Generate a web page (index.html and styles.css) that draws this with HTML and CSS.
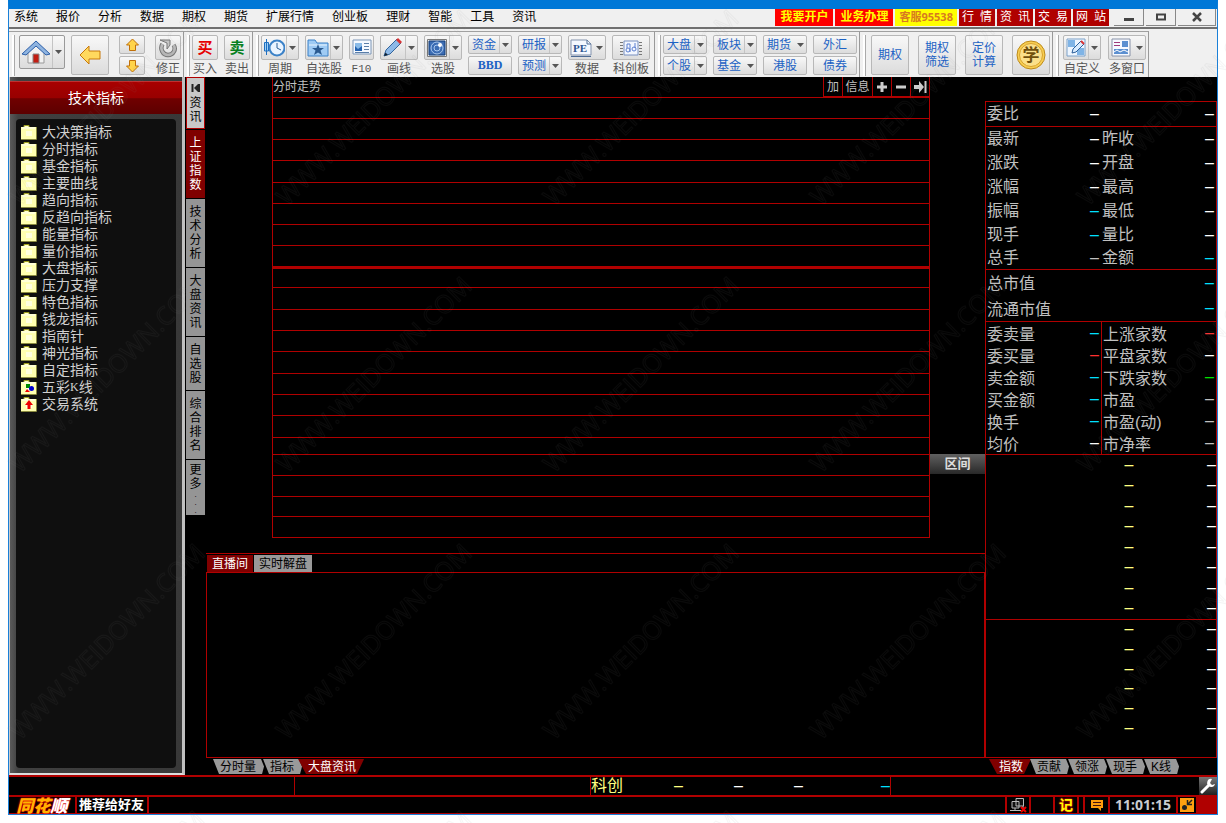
FILE: index.html
```html
<!DOCTYPE html>
<html lang="zh-CN">
<head>
<meta charset="utf-8">
<title>同花顺</title>
<link rel="stylesheet" href="styles.css">
</head>
<body>
<svg class="defs" aria-hidden="true">
  <symbol id="caret" viewBox="0 0 7 4"><path d="M0 0H7L3.500 4Z" fill="#555"/></symbol>
  <symbol id="folder" viewBox="0 0 16 15"><path d="M3 2V0.500H8V2" fill="#ffc" stroke="#a0a020"/><path d="M0 2H15V14H0Z" fill="#ffffb0"/><path d="M0 14.500H15.500V2" fill="none" stroke="#8a8a40"/><path d="M1 3H14" stroke="#fff"/><path d="M5 6H11V11H5Z" fill="#ffffe0"/></symbol>
</svg>
<div class="window">
  <header>
    <div class="menubar">
      <nav class="menu">
        <button>系统</button><button>报价</button><button>分析</button><button>数据</button><button>期权</button><button>期货</button><button>扩展行情</button><button>创业板</button><button>理财</button><button>智能</button><button>工具</button><button>资讯</button>
      </nav>
      <div class="tags">
        <a class="hot" href="#">我要开户</a><a class="hot" href="#">业务办理</a><a class="phone" href="#">客服95538</a><a href="#">行&#8194;情</a><a href="#">资&#8194;讯</a><a href="#">交&#8194;易</a><a href="#">网&#8194;站</a>
      </div>
      <div class="winbtns">
        <button aria-label="最小化"><svg width="12" height="10"><path d="M1 7.500H11" stroke="#444" stroke-width="3"/></svg></button>
        <button aria-label="最大化"><svg width="12" height="10"><path d="M2 2.500H10V7.500H2Z" fill="none" stroke="#444" stroke-width="2"/></svg></button>
        <button class="close" aria-label="关闭"><svg width="12" height="10"><path d="M2 1L10 9M10 1L2 9" stroke="#444" stroke-width="2.500"/></svg></button>
      </div>
    </div>
    <div class="toolbar">
      <div class="group wide">
        <div class="split home">
          <button aria-label="首页"><svg width="30" height="30" viewBox="0 0 30 30"><path d="M7 15V26H23V15L15 8Z" fill="#f2f2f2" stroke="#999"/><path d="M1 17L15 4L29 17L25 18L15 9L5 18Z" fill="#8fb4e0" stroke="#2d5fa8"/><path d="M12 17H18V26H12Z" fill="#c21d12" stroke="#888"/></svg></button>
          <button aria-label="首页菜单"><svg width="7" height="4"><use href="#caret"/></svg></button>
        </div>
        <button class="btn big" aria-label="后退"><svg width="24" height="24" viewBox="0 0 24 24"><path d="M2 12L11 3V8H22V16H11V21Z" fill="#ffd95e" stroke="#c8780a"/></svg></button>
        <div class="stack updown">
          <button class="btn" aria-label="上翻"><svg width="15" height="14" viewBox="0 0 15 14"><path d="M7.500 1L13.500 7H10.500V12.500H4.500V7H1.500Z" fill="#ffd44a" stroke="#c0700a"/></svg></button>
          <button class="btn" aria-label="下翻"><svg width="15" height="14" viewBox="0 0 15 14"><path d="M7.500 13L13.500 7H10.500V1.500H4.500V7H1.500Z" fill="#ffd44a" stroke="#c0700a"/></svg></button>
        </div>
        <div class="tool narrow"><button class="btn" id="t1"><svg width="20" height="20" viewBox="0 0 20 20"><path d="M4.500 6C1.500 11 5 17 10 17C15.500 17 18.500 11 15.500 7" fill="none" stroke="#777" stroke-width="4.500"/><path d="M4.500 6C1.500 11 5 17 10 17C15.500 17 18.500 11 15.500 7" fill="none" stroke="#b8b8b8" stroke-width="2.500"/><path d="M2 2H12V7L9 11V5Z" fill="#c4c4c4" stroke="#777"/></svg></button><label for="t1">修正</label></div>
      </div>
      <div class="group">
        <div class="tool narrow"><button class="btn buy" id="t2">买</button><label for="t2">买入</label></div>
        <div class="tool narrow"><button class="btn sell" id="t3">卖</button><label for="t3">卖出</label></div>
      </div>
      <div class="group charts">
        <div class="tool"><div class="split"><button id="t4"><svg width="22" height="20" viewBox="0 0 22 20"><circle cx="14" cy="10" r="7.500" fill="#eaf4ff" stroke="#3b82c8" stroke-width="2"/><path d="M14 5V10L18 12" fill="none" stroke="#2a5f96"/><path d="M3.500 1V17M1.500 4.500H5.500V13H1.500Z" fill="#9fd0f6" stroke="#1e6fc0"/></svg></button><button aria-label="周期菜单"><svg width="7" height="4"><use href="#caret"/></svg></button></div><label for="t4">周期</label></div>
        <div class="tool"><div class="split"><button id="t5"><svg width="22" height="20" viewBox="0 0 22 20"><path d="M1 18V2H8L10 5H21V18Z" fill="#9fcbf4" stroke="#3c82c8"/><path d="M2 7H20" stroke="#e9f5ff"/><path d="M11 6L12.500 10H17L13.500 12.500L15 17L11 14.500L7 17L8.500 12.500L5 10H9.500Z" fill="#2a5a90"/></svg></button><button aria-label="自选股菜单"><svg width="7" height="4"><use href="#caret"/></svg></button></div><label for="t5">自选股</label></div>
        <div class="tool slim"><button class="btn" id="t6"><svg width="20" height="20" viewBox="0 0 20 20"><path d="M1 2H19V16H1Z" fill="#f5f9ff" stroke="#7d97b8"/><path d="M3 5H10V13H3Z" fill="#8abbe8"/><path d="M3 8L6 11L10 8V13H3Z" fill="#2463b0"/><path d="M12 5.500H17M12 8.500H17M12 11.500H17M3 14.500H17" stroke="#5a7ea8"/></svg></button><label for="t6">F10</label></div>
        <div class="tool"><div class="split"><button id="t7"><svg width="22" height="20" viewBox="0 0 22 20"><path d="M2 18L4 12L15 1L19 5L8 16Z" fill="#8db9e8" stroke="#33659c"/><path d="M14 2L16 0L20 4L18 6Z" fill="#d83232"/><path d="M2 18L3.500 14.500L6 17Z" fill="#123"/></svg></button><button aria-label="画线菜单"><svg width="7" height="4"><use href="#caret"/></svg></button></div><label for="t7">画线</label></div>
        <div class="tool"><div class="split"><button id="t8"><svg width="22" height="20" viewBox="0 0 22 20"><path d="M1.500 1.500H20.500V18.500H1.500Z" fill="#eee" stroke="#777"/><path d="M3 3H19V17H3Z" fill="#3a6cb4" stroke="#123c78"/><circle cx="11" cy="10" r="6" fill="none" stroke="#a9c8ee"/><circle cx="11" cy="10" r="3" fill="none" stroke="#a9c8ee"/><circle cx="14" cy="7" r="2" fill="#fff"/></svg></button><button aria-label="选股菜单"><svg width="7" height="4"><use href="#caret"/></svg></button></div><label for="t8">选股</label></div>
        <div class="stack">
          <div class="split text"><button>资金</button><button aria-label="资金菜单"><svg width="7" height="4"><use href="#caret"/></svg></button></div>
          <button class="btn bbd">BBD</button>
        </div>
        <div class="stack">
          <div class="split text"><button>研报</button><button aria-label="研报菜单"><svg width="7" height="4"><use href="#caret"/></svg></button></div>
          <div class="split text"><button>预测</button><button aria-label="预测菜单"><svg width="7" height="4"><use href="#caret"/></svg></button></div>
        </div>
        <div class="tool"><div class="split plain"><button id="t9"><svg width="22" height="20" viewBox="0 0 22 20"><path d="M1 17V2H17L21 6V17Z" fill="#f4f8ff" stroke="#8393ad"/><path d="M17 2V6H21M1 18.500H21" fill="none" stroke="#4c6a94"/><text x="3" y="14" class="pe">PE</text></svg></button><button aria-label="数据菜单"><svg width="7" height="4"><use href="#caret"/></svg></button></div><label for="t9">数据</label></div>
        <div class="tool"><button class="btn" id="t10"><svg width="24" height="18" viewBox="0 0 24 18"><path d="M1 3.500H4M1 6.500H4M1 9.500H4M1 12.500H4M1 15.500H4M20 3.500H23M20 6.500H23M20 9.500H23M20 12.500H23M20 15.500H23" stroke="#777"/><path d="M5 2H19V16H5Z" fill="#f2f6ff" stroke="#7890c0"/><path d="M8 9V5H11V13M16 4V9" fill="none" stroke="#5b7fd0"/><circle cx="9" cy="11" r="2" fill="none" stroke="#5b7fd0"/><circle cx="15" cy="10" r="2" fill="none" stroke="#5b7fd0"/></svg></button><label for="t10">科创板</label></div>
      </div>
      <div class="group">
        <div class="stack">
          <div class="split text"><button>大盘</button><button aria-label="大盘菜单"><svg width="7" height="4"><use href="#caret"/></svg></button></div>
          <div class="split text"><button>个股</button><button aria-label="个股菜单"><svg width="7" height="4"><use href="#caret"/></svg></button></div>
        </div>
        <div class="stack">
          <div class="split text"><button>板块</button><button aria-label="板块菜单"><svg width="7" height="4"><use href="#caret"/></svg></button></div>
          <div class="split text plain"><button>基金</button><button aria-label="基金菜单"><svg width="7" height="4"><use href="#caret"/></svg></button></div>
        </div>
        <div class="stack">
          <div class="split text plain"><button>期货</button><button aria-label="期货菜单"><svg width="7" height="4"><use href="#caret"/></svg></button></div>
          <button class="btn">港股</button>
        </div>
        <div class="stack"><button class="btn">外汇</button><button class="btn">债券</button></div>
      </div>
      <div class="group wide">
        <button class="btn big">期权</button>
        <button class="btn big">期权筛选</button>
        <button class="btn big">定价计算</button>
        <button class="btn big coinbtn" aria-label="学堂"><svg width="30" height="30" viewBox="0 0 30 30"><circle cx="15" cy="15" r="14" fill="#f8cf52" stroke="#bd8a1c"/><circle cx="15" cy="15" r="11.500" fill="#fbe08a" stroke="#d9a32c"/><text x="15" y="21" text-anchor="middle" class="coin">学</text></svg></button>
      </div>
      <div class="group wide last">
        <div class="tool"><div class="split"><button id="t11"><svg width="20" height="20" viewBox="0 0 20 20"><path d="M1 1H19V18H1Z" fill="#eef6ff" stroke="#7aa0c8"/><path d="M2 2H9V9H2ZM11 10H18V17H11Z" fill="#7fb4e6"/><path d="M6 15L7 11L15 3L18 6L10 14Z" fill="#d9ecff" stroke="#2c5f9a"/><path d="M15 3L18 6" stroke="#d33" stroke-width="2"/></svg></button><button aria-label="自定义菜单"><svg width="7" height="4"><use href="#caret"/></svg></button></div><label for="t11">自定义</label></div>
        <div class="tool"><div class="split plain"><button id="t12"><svg width="20" height="20" viewBox="0 0 20 20"><path d="M1 1H19V18H1Z" fill="#f6f9ff" stroke="#8792a8"/><path d="M3 4.500H9M3 7.500H9" stroke="#a03a7a"/><path d="M11 3H17V9H11ZM3 11H17V16H3Z" fill="#5b8fd0"/><path d="M3 14L6 12L9 14L13 12L17 14" fill="none" stroke="#fff"/></svg></button><button aria-label="多窗口菜单"><svg width="7" height="4"><use href="#caret"/></svg></button></div><label for="t12">多窗口</label></div>
      </div>
    </div>
  </header>

  <main>
    <aside class="side">
      <h1>技术指标</h1>
      <ul class="tree">
        <li><svg><use href="#folder"/></svg>大决策指标</li>
        <li><svg><use href="#folder"/></svg>分时指标</li>
        <li><svg><use href="#folder"/></svg>基金指标</li>
        <li><svg><use href="#folder"/></svg>主要曲线</li>
        <li><svg><use href="#folder"/></svg>趋向指标</li>
        <li><svg><use href="#folder"/></svg>反趋向指标</li>
        <li><svg><use href="#folder"/></svg>能量指标</li>
        <li><svg><use href="#folder"/></svg>量价指标</li>
        <li><svg><use href="#folder"/></svg>大盘指标</li>
        <li><svg><use href="#folder"/></svg>压力支撑</li>
        <li><svg><use href="#folder"/></svg>特色指标</li>
        <li><svg><use href="#folder"/></svg>钱龙指标</li>
        <li><svg><use href="#folder"/></svg>指南针</li>
        <li><svg><use href="#folder"/></svg>神光指标</li>
        <li><svg><use href="#folder"/></svg>自定指标</li>
        <li><svg><use href="#folder"/><path d="M5 4H9V8H5Z" fill="#080"/><circle cx="10.500" cy="8.500" r="2.500" fill="#00c"/><path d="M4 12L6 9L9 12Z" fill="#e00"/></svg>五彩<span class="serif">K</span>线</li>
        <li><svg><use href="#folder"/><path d="M8 3L12 8H9.500V12H6.500V8H4Z" fill="#e00"/></svg>交易系统</li>
      </ul>
    </aside>

    <nav class="vtabs">
      <button class="first"><svg width="10" height="10"><path d="M1.500 1V9" stroke="#222" stroke-width="2"/><path d="M7 1V9L3 5Z" fill="#222"/><path d="M8 1V9" stroke="#222" stroke-width="2"/></svg><span>资讯</span></button>
      <button class="four on"><span>上证指数</span></button>
      <button class="four"><span>技术分析</span></button>
      <button class="four"><span>大盘资讯</span></button>
      <button><span>自选股</span></button>
      <button class="four"><span>综合排名</span></button>
      <button class="more"><span>更多</span><span class="dots">...</span></button>
    </nav>

    <section class="center">
      <div class="chart">
        <div class="chart-head">
          <h2>分时走势</h2>
          <div class="chart-tools"><button>加</button><button class="info">信息</button><button aria-label="放大"><svg width="12" height="12"><path d="M6 1V11M1 6H11" stroke="#ccc" stroke-width="3"/></svg></button><button aria-label="缩小"><svg width="12" height="12"><path d="M1 6H11" stroke="#ccc" stroke-width="3"/></svg></button><button aria-label="移到末尾"><svg width="13" height="12"><path d="M0 4H5V0L10 6L5 12V8H0Z" fill="#ccc"/><path d="M11.500 0V12" stroke="#ccc" stroke-width="2"/></svg></button></div>
        </div>
        <div class="price up"><i></i><i></i><i></i><i></i><i></i><i></i><i></i><i></i></div>
        <div class="price down"><i></i><i></i><i></i><i></i><i></i><i></i><i></i><i></i><i></i></div>
        <div class="volume"><i></i><i></i><i></i><i></i></div>
        <button class="range">区间</button>
      </div>
      <div class="live">
        <div class="live-tabs"><button class="on">直播间</button><button>实时解盘</button></div>
        <div class="live-body"></div>
      </div>
      <div class="slant"><button>分时量</button><button>指标</button><button class="on">大盘资讯</button></div>
    </section>

    <section class="quote">
      <div class="quote-box">
        <table class="ratio"><tr><th>委比</th><td>–</td><th></th><td>–</td></tr></table>
        <table class="basic">
          <tr><th>最新</th><td>–</td><th>昨收</th><td>–</td></tr>
          <tr><th>涨跌</th><td>–</td><th>开盘</th><td>–</td></tr>
          <tr><th>涨幅</th><td>–</td><th>最高</th><td>–</td></tr>
          <tr><th>振幅</th><td class="c">–</td><th>最低</th><td>–</td></tr>
          <tr><th>现手</th><td class="c">–</td><th>量比</th><td>–</td></tr>
          <tr><th>总手</th><td class="g">–</td><th>金额</th><td class="c">–</td></tr>
        </table>
        <table class="cap">
          <tr><th>总市值</th><td class="c">–</td></tr>
          <tr><th>流通市值</th><td class="c">–</td></tr>
        </table>
        <table class="detail">
          <tr><th>委卖量</th><td class="c">–</td><th>上涨家数</th><td class="r">–</td></tr>
          <tr><th>委买量</th><td class="r">–</td><th>平盘家数</th><td>–</td></tr>
          <tr><th>卖金额</th><td class="c">–</td><th>下跌家数</th><td class="green">–</td></tr>
          <tr><th>买金额</th><td class="c">–</td><th>市盈</th><td class="g">–</td></tr>
          <tr><th>换手</th><td class="c">–</td><th>市盈(动)</th><td class="g">–</td></tr>
          <tr><th>均价</th><td>–</td><th>市净率</th><td class="g">–</td></tr>
        </table>
        <div class="ticks eight"><table>
          <tr><td class="y">–</td><td>–</td></tr><tr><td class="y">–</td><td>–</td></tr><tr><td class="y">–</td><td>–</td></tr><tr><td class="y">–</td><td>–</td></tr><tr><td class="y">–</td><td>–</td></tr><tr><td class="y">–</td><td>–</td></tr><tr><td class="y">–</td><td>–</td></tr><tr><td class="y">–</td><td>–</td></tr>
        </table></div>
        <div class="ticks six"><table>
          <tr><td class="y">–</td><td>–</td></tr><tr><td class="y">–</td><td>–</td></tr><tr><td class="y">–</td><td>–</td></tr><tr><td class="y">–</td><td>–</td></tr><tr><td class="y">–</td><td>–</td></tr><tr><td class="y">–</td><td>–</td></tr>
        </table></div>
      </div>
      <div class="slant"><button class="on">指数</button><button>贡献</button><button>领涨</button><button>现手</button><button>K线</button></div>
    </section>
  </main>

  <footer>
    <div class="ticker">
      <div></div><div></div>
      <div class="board"><b>科创</b><span class="y">–</span><span>–</span><span>–</span><span class="c">–</span></div>
      <button aria-label="设置"><svg width="16" height="16" viewBox="0 0 16 16"><path d="M2 14L8 8" stroke="#fff" stroke-width="3" stroke-linecap="round"/><path d="M12 1A4 4 0 1 0 15 6L12 7L10 5Z" fill="#fff"/></svg></button>
    </div>
    <div class="status">
      <a class="logo" href="#"><span>同花</span><span class="white">顺</span></a>
      <a class="friend" href="#">推荐给好友</a>
      <button class="net" aria-label="网络"><svg width="18" height="16" viewBox="0 0 18 16"><path d="M7 1.500H14.500V9H7ZM3 4.500H10V11H3ZM1 13.500H12M6 11V13M14 9V12" fill="#111" stroke="#bbb"/><path d="M12 10L17 15M17 10L12 15" stroke="#e00" stroke-width="2"/></svg></button>
      <span class="blank"></span>
      <button class="note">记</button>
      <span class="gapcell"></span>
      <button class="chat" aria-label="消息"><svg width="14" height="14" viewBox="0 0 14 14"><path d="M1 2H13V10H11V13L8 10H1Z" fill="#ff9c0c"/><path d="M3 4.500H11M3 7.500H11" stroke="#411"/></svg></button>
      <time>11:01:15</time>
      <button class="shrink" aria-label="收起"><svg width="14" height="14" viewBox="0 0 14 14"><path d="M0 0H14V14H0Z" fill="#ffa010"/><circle cx="4.500" cy="9.500" r="2.500" fill="#222"/><path d="M7.500 2V6.500H12M7.500 6.500L12 2" fill="none" stroke="#222" stroke-width="1.500"/></svg></button>
      <span class="corner"></span>
    </div>
  </footer>
</div>
<svg class="watermark" aria-hidden="true">
  <pattern id="wm" width="267" height="267" patternUnits="userSpaceOnUse"><text transform="translate(20 207) rotate(-45)">WWW.WEIDOWN.COM</text></pattern>
  <rect width="100%" height="100%" fill="url(#wm)"/>
</svg>
</body>
</html>
```
FILE: styles.css
```css
* { box-sizing: border-box; }
body {
  margin: 0;
  background: #fff;
  font: 12px/14px "Liberation Sans", "Noto Sans CJK SC", sans-serif;
  color: #c0c0c0;
}
button { font: inherit; color: inherit; border: 0; padding: 0; margin: 0; background: none; display: flex; align-items: center; justify-content: center; }
a { color: inherit; text-decoration: none; }
h1, h2, ul { margin: 0; padding: 0; font-weight: 400; }
.defs { position: absolute; width: 0; height: 0; }
.watermark { position: absolute; top: 0; left: 0; width: 100%; height: 100%; pointer-events: none; }
.watermark text { font: 25px "Open Sans", sans-serif; fill: none; stroke: #808080; stroke-opacity: .08; }

.window {
  margin: 0 8px;
  min-height: calc(100vh - 8px);
  display: flex;
  flex-direction: column;
  background: #000;
  border: 1px solid #1a80d8;
  border-top: 9px solid #0078d7;
}

/* menu bar */
header { background: #f0f0f0; color: #000; }
.menubar { display: flex; height: 18px; }
.menu { display: flex; gap: 18px; padding-left: 5px; flex: 1; }
.menu button { height: 16px; }
.tags { display: flex; gap: 2px; height: 17px; line-height: 16px; color: #fff; }
.tags a { background: #b00000; padding: 0 3px; }
.tags .hot { background: #f00; color: #ff0; font-weight: 700; padding: 0 5px; }
.tags .phone { background: #ff0; color: #d87a20; font: 700 11px/16px "Noto Sans", "Noto Sans CJK SC", sans-serif; padding: 0 4px; }
.winbtns { display: flex; gap: 2px; padding: 0 1px 0 5px; height: 17px; }
.winbtns button { width: 30px; border: solid #888; border-width: 0 1px 1px 0; }
.winbtns .close { width: 38px; }

/* toolbar */
.toolbar { display: flex; height: 50px; border-top: 2px solid #707070; }
.group { display: flex; align-items: flex-start; gap: 6px; margin-top: 2px; padding: 3px 2px 0 3px; border-top: 1px solid #a0a0a0; border-right: 1px solid #999; }
.group.charts { padding-right: 4px; }
.group::before { content: ""; width: 2px; height: 41px; margin-right: -4px; border: solid #aaa; border-width: 0 1px 0 0; background: #fff; }
.group.wide { gap: 9px; }
.group.wide:first-child { gap: 6px; }
.group.wide:first-child::before { margin-right: -2px; }
.group.last { gap: 7px; }
.group.last::before { margin-right: -3px; }
.btn, .split {
  background: linear-gradient(#f8f8f8, #dcdcdc);
  border: 1px solid #b8b8b8;
  border-radius: 2px;
  color: #1c62c4;
}
.split { display: flex; }
.split button { flex: 1; }
.split button + button { flex: 0 0 12px; border-left: 1px solid #c4c4c4; }
.split.plain button + button { border-color: transparent; }
.home { width: 46px; height: 34px; border-color: #999; }
.big { width: 38px; height: 40px; padding: 0 6px; text-align: center; }
.coinbtn { padding: 0; }
.stack { display: flex; flex-direction: column; gap: 2px; width: 44px; }
.stack > * { height: 19px; }
.updown { width: 26px; margin: 0 4px; }
.tool { width: 38px; display: flex; flex-direction: column; align-items: stretch; }
.tool.narrow { width: 26px; }
.tool.slim { width: 25px; }
.tool > .btn, .tool > .split { height: 25px; }
.tool label { color: #555; line-height: 18px; text-align: center; white-space: nowrap; }
.slim label { font-family: "Liberation Mono", monospace; font-size: 11px; }
.btn.buy { color: #e60000; font-size: 15px; font-weight: 700; }
.btn.sell { color: #078020; font-size: 15px; font-weight: 700; }
.bbd { font: 700 12px "Liberation Serif", serif; }
.pe { font: 700 11px "Liberation Serif", serif; fill: #2d5590; }
.coin { font: 700 17px "Noto Sans CJK SC", sans-serif; fill: #70500c; }

/* body */
main { flex: 1; display: grid; grid-template-columns: 176px 21px minmax(0, 1fr) 232px; }
.side { display: flex; flex-direction: column; padding: 4px 6px 5px; background: linear-gradient(90deg, #5a5a5a, #404040 8px, #383838); border-right: 3px solid #c0c0c0; border-bottom: 2px solid #ddd; border-left: 1px solid #ccc; }
.side h1 { margin: 0 -6px 5px; height: 33px; font-size: 14px; line-height: 32px; text-align: center; color: #fff; background: linear-gradient(#a80000, #980000 50%, #700000 52%, #5c0000); border-top: 1px solid #c03030; }
.tree { flex: 1; list-style: none; padding: 5px; background: #0f0f0f; border-radius: 4px; font-size: 14px; line-height: 17px; color: #d0d0d0; }
.tree li { display: flex; align-items: center; height: 17px; }
.tree svg { width: 16px; height: 15px; margin-right: 5px; }
.serif { font-family: "Liberation Serif", serif; font-size: 12px; }

.vtabs { display: flex; flex-direction: column; gap: 1px; padding: 0 1px; color: #000; }
.vtabs button { flex-direction: column; background: #959595; min-height: 53px; }
.vtabs span { width: 12px; line-height: 14px; }
.vtabs .four { min-height: 68px; }
.vtabs .on { background: #800000; color: #fff; }
.vtabs .first { background: #c8c8c8; border: 1px solid #b00000; min-height: 52px; gap: 3px; }
.vtabs .more { padding-top: 3px; }
.vtabs .dots { width: 4px; font-size: 8px; line-height: 8px; line-break: anywhere; }

.center { display: flex; flex-direction: column; }
.chart {
  flex: 461;
  display: grid;
  grid-template-columns: minmax(0, 1fr) 55px;
  grid-template-rows: 20px 169fr 188fr 84fr;
  margin: 0 0 15px 66px;
}
.chart-head, .price, .volume { grid-column: 1; border: solid #b00000; border-width: 0 1px; }
.chart-head { display: flex; justify-content: space-between; }
.chart-head h2 { font-size: 12px; line-height: 21px; }
.chart-tools { display: flex; }
.chart-tools button { width: 19px; border: solid #b00000; border-width: 0 0 1px 1px; }
.chart-tools .info { width: 30px; }
.price, .volume { display: flex; flex-direction: column; border-top-width: 1px; }
.price i, .volume i { flex: 10; border-bottom: 1px solid #b00000; }
.price i:last-child { border-bottom: 0; }
.price.down { border-top-width: 3px; }
.price.down i:first-child { flex: 9; }
.price.down i:last-child { flex: 8; }
.range { grid-column: 2; grid-row: 4; height: 20px; color: #ddd; background: linear-gradient(#606060, #282828); font-weight: 700; font-size: 13px; }
.live { flex: 204; display: flex; flex-direction: column; border-top: 1px solid #b00000; }
.live-tabs { display: flex; gap: 1px; padding: 1px 1px 0; height: 18px; color: #000; }
.live-tabs button { padding: 0 5px; background: #999; }
.live-tabs .on { background: #800000; color: #fff; }
.live-body { flex: 1; border: 1px solid #b00000; }

.slant { display: flex; height: 17px; padding: 1px 4px 1px; color: #000; }
.slant button { height: 15px; padding: 0 8px 0 10px; background: #999; clip-path: polygon(3px 0, calc(100% - 3px) 0, 100% 50%, calc(100% - 2px) 100%, 9px 100%); }
.slant button + button { margin-left: -4px; }
.slant .on { background: #800000; color: #fff; clip-path: polygon(0 0, 100% 0, calc(100% - 7px) 100%, 8px 100%); }

/* quote panel */
.quote { display: flex; flex-direction: column; padding-top: 24px; }
.quote-box { flex: 1; display: flex; flex-direction: column; border: 1px solid #b00000; }
.quote table { width: 100%; border-spacing: 0; table-layout: fixed; border-bottom: 1px solid #b00000; }
.quote th { padding: 0 0 0 1px; font-size: 16px; font-weight: 400; text-align: left; white-space: nowrap; }
.quote td { padding: 0 2px 1px 0; width: 18px; font-size: 16px; text-align: right; color: #fff; }
.ratio tr, .basic tr { height: 24px; }
.basic tr:last-child { height: 22px; }
.cap tr { height: 26px; }
.cap tr:last-child { height: 25px; }
.detail tr { height: 22px; }
.quote .cap th { padding-top: 2px; }
.quote .detail th { padding-top: 3px; }
.detail th:nth-child(3) { border-left: 1px solid #b00000; }
.quote td.c, .c { color: #00e0ff; }
.quote td.r { color: #ff3030; }
.quote td.g { color: #c0c0c0; }
.quote td.green { color: #00e000; }
.quote td.y, .board .y { color: #ffff80; }
.quote .ticks table { border: 0; height: 100%; }
.ticks td:first-child { width: 65%; }
.quote .ticks td:last-child { width: 35%; padding-right: 0; }
.ticks.eight { height: 165px; border-bottom: 1px solid #b00000; }
.ticks.six { flex: 1; padding-bottom: 19px; }

/* footer */
.ticker { display: grid; grid-template-columns: 286fr 296fr 300fr 308fr 18px; height: 20px; border-top: 2px solid #b00000; }
.ticker > div { border-right: 1px solid #b00000; }
.ticker .board { display: grid; grid-template-columns: 32px 60px 60px 60px 1fr; align-items: center; text-align: right; font-size: 16px; color: #fff; }
.board b { font-weight: 400; color: #ffff80; text-align: left; }
.ticker button { grid-column: 5; background: linear-gradient(#777, #222); }
.status { display: flex; height: 19px; border: solid #b00000; border-width: 2px 0 1px; }
.status > * { display: flex; align-items: center; justify-content: center; border-right: 2px solid #b00000; }
.logo { width: 68px; font: italic 900 17px/16px "Noto Sans CJK SC", sans-serif; color: #ffb400; text-shadow: 0 0 2px #f00, 0 0 1px #f00; }
.logo .white { color: #fff; }
.friend { color: #fff; font-weight: 700; font-size: 13px; padding: 0 3px 0 2px; margin-right: auto; }
.net { width: 26px; border-left: 2px solid #b00000; }
.blank { width: 24px; }
.note { width: 24px; color: #ff0; font-weight: 700; font-size: 14px; text-shadow: 0 0 2px #f00, 0 0 2px #f00; }
.gapcell { width: 6px; }
.chat { width: 25px; }
.status time { width: 68px; font: 700 14px/16px "Noto Sans", sans-serif; color: #c8ccd0; }
.shrink { width: 20px; }
.corner { width: 19px; background: #b00000; }
```
